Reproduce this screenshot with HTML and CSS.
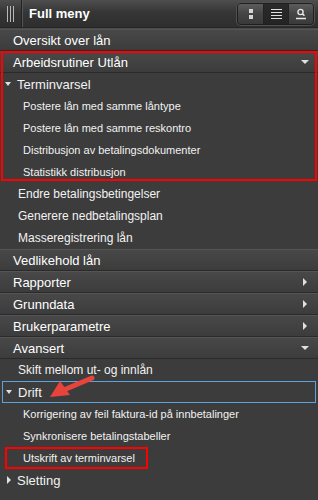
FILE: index.html
```html
<!DOCTYPE html>
<html lang="no">
<head>
    <meta charset="UTF-8">
    <title>Full meny</title>
    <link rel="stylesheet" href="styles.css">
</head>
<body>
    <div class="panel">
        <div class="header">
            <div class="grip"><span></span><span></span><span></span></div>
            <div class="title">Full meny</div>
            <div class="tools">
                <button class="tool"><span class="ico-tiles"><i></i><i></i></span></button>
                <button class="tool active"><span class="ico-lines"><i></i><i></i><i></i><i></i></span></button>
                <button class="tool">
                    <svg width="12" height="12" viewBox="0 0 12 12">
                        <circle cx="5.5" cy="4" r="2.6" fill="none" stroke="#e6e6e6" stroke-width="1.4"/>
                        <path d="M7.3 5.8 L9.5 7.6" stroke="#e6e6e6" stroke-width="1.5"/>
                        <path d="M1 10.5 H11" stroke="#e6e6e6" stroke-width="1.4"/>
                    </svg>
                </button>
            </div>
        </div>

        <div class="menu">
            <div class="row top">Oversikt over lån</div>

            <div class="marked">
                <div class="row top">Arbeidsrutiner Utlån <span class="arrow-down"></span></div>
                <div class="row group"><span class="tri-down"></span>Terminvarsel</div>
                <div class="row item">Postere lån med samme låntype</div>
                <div class="row item">Postere lån med samme reskontro</div>
                <div class="row item">Distribusjon av betalingsdokumenter</div>
                <div class="row item">Statistikk distribusjon</div>
            </div>

            <div class="row sub">Endre betalingsbetingelser</div>
            <div class="row sub">Generere nedbetalingsplan</div>
            <div class="row sub">Masseregistrering lån</div>

            <div class="row top">Vedlikehold lån</div>
            <div class="row top">Rapporter <span class="arrow-right"></span></div>
            <div class="row top">Grunndata <span class="arrow-right"></span></div>
            <div class="row top">Brukerparametre <span class="arrow-right"></span></div>
            <div class="row top">Avansert <span class="arrow-down"></span></div>
            <div class="row sub">Skift mellom ut- og innlån</div>

            <div class="row group focused"><span class="tri-down"></span>Drift</div>
            <div class="row item">Korrigering av feil faktura-id på innbetalinger</div>
            <div class="row item">Synkronisere betalingstabeller</div>
            <div class="row item"><span class="boxed">Utskrift av terminvarsel</span></div>
            <div class="row group"><span class="tri-right"></span>Sletting</div>

            <!-- pil som peker på Drift -->
            <svg class="pointer" width="50" height="28" viewBox="0 0 50 28">
                <path d="M44 4 L18 15" stroke="#e8443c" stroke-width="5" stroke-linecap="round"/>
                <path d="M2 23 L12 7 L22 21 Z" fill="#e8443c"/>
            </svg>
        </div>
    </div>
</body>
</html>
```

FILE: styles.css
```css
body {
    margin: 0;
    background-color: #3c3c3c;
    font-family: "Liberation Sans", Arial, sans-serif;
    color: #f2f2f2;
}

.panel {
    width: 318px;
    height: 500px;
    background-color: #3c3c3c;
    overflow: hidden;
}

.header {
    height: 27px;
    display: flex;
    align-items: center;
    background: linear-gradient(#4e4e4e, #363636 45%, #2e2e2e);
    border-bottom: 1px solid #262626;
    box-shadow: 0 1px 0 #4a4a4a;
    margin-bottom: 1px;
}

.grip {
    width: 21px;
    height: 100%;
    display: flex;
    justify-content: center;
    align-items: center;
    gap: 2px;
    border-right: 1px solid #222;
    box-shadow: 1px 0 0 #555;
}

.grip span {
    width: 1px;
    height: 16px;
    background-color: #b8b8b8;
}

.title {
    flex: 1;
    padding-left: 7px;
    font-size: 13px;
    font-weight: bold;
    color: #fff;
}

.tools {
    display: flex;
    margin-right: 4px;
    border: 1px solid #1f1f1f;
    border-radius: 4px;
    overflow: hidden;
    box-shadow: 0 0 0 1px #505050;
}

.tool {
    width: 25px;
    height: 20px;
    padding: 0;
    border: none;
    border-left: 1px solid #222;
    background: linear-gradient(#5c5c5c, #444 50%, #3a3a3a);
    display: flex;
    justify-content: center;
    align-items: center;
}

.tool:first-child {
    border-left: none;
}

.tool.active {
    background: linear-gradient(#2a2a2a, #242424);
}

.ico-tiles {
    display: flex;
    flex-direction: column;
    gap: 2px;
}

.ico-tiles i {
    width: 4px;
    height: 4px;
    background-color: #d6d6d6;
}

.ico-lines {
    display: flex;
    flex-direction: column;
    gap: 2px;
}

.ico-lines i {
    width: 11px;
    height: 1px;
    background-color: #e0e0e0;
}

.menu {
    position: relative;
}

.row {
    height: 22px;
    display: flex;
    align-items: center;
    box-sizing: border-box;
    white-space: nowrap;
}

.top {
    padding-left: 13px;
    padding-right: 9px;
    font-size: 13px;
    color: #fff;
    background: linear-gradient(#484848, #3c3c3c);
    border-top: 1px solid #555;
    border-bottom: 1px solid #2a2a2a;
}

.group {
    padding-left: 5px;
    font-size: 13px;
}

.sub {
    padding-left: 18px;
    font-size: 12px;
}

.item {
    padding-left: 23px;
    font-size: 11px;
}

.arrow-down {
    margin-left: auto;
    width: 0;
    height: 0;
    border-left: 4px solid transparent;
    border-right: 4px solid transparent;
    border-top: 4px solid #e0e0e0;
}

.arrow-right {
    margin-left: auto;
    margin-right: 2px;
    width: 0;
    height: 0;
    border-top: 4px solid transparent;
    border-bottom: 4px solid transparent;
    border-left: 4px solid #e0e0e0;
}

.tri-down {
    width: 0;
    height: 0;
    margin-right: 6px;
    border-left: 3.5px solid transparent;
    border-right: 3.5px solid transparent;
    border-top: 4px solid #e0e0e0;
}

.tri-right {
    width: 0;
    height: 0;
    margin: 0 6px 0 2px;
    border-top: 4px solid transparent;
    border-bottom: 4px solid transparent;
    border-left: 4px solid #e0e0e0;
}

.marked {
    position: relative;
}

.marked::after {
    content: "";
    position: absolute;
    left: 1px;
    right: 1px;
    top: 0;
    bottom: 2px;
    border: 2px solid #f00;
    pointer-events: none;
}

.focused {
    margin: 0 2px;
    padding-left: 3px;
    border: 1px solid #5ba3dc;
}

.boxed {
    margin-left: -18px;
    padding: 0 0 0 16px;
    width: 143px;
    height: 22px;
    line-height: 18px;
    box-sizing: border-box;
    border: 2px solid #f00;
}

.pointer {
    position: absolute;
    left: 48px;
    top: 345px;
}
```
